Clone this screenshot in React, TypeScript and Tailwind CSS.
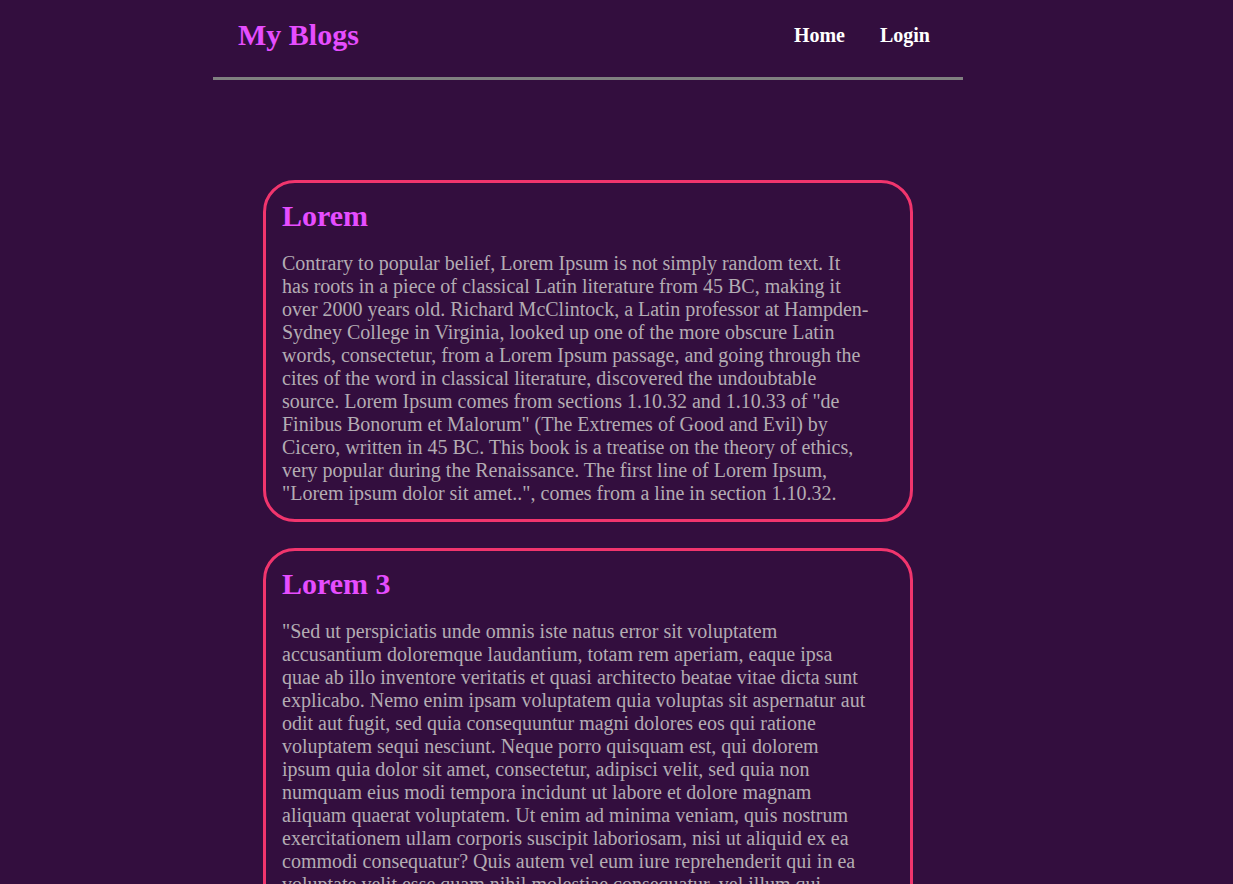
export default function App() {
  const serif = { fontFamily: '"Liberation Serif", "Times New Roman", serif' };
  const blogs = [
    {
      title: "Lorem",
      body:
        'Contrary to popular belief, Lorem Ipsum is not simply random text. It has roots in a piece of classical Latin literature from 45 BC, making it over 2000 years old. Richard McClintock, a Latin professor at Hampden-Sydney College in Virginia, looked up one of the more obscure Latin words, consectetur, from a Lorem Ipsum passage, and going through the cites of the word in classical literature, discovered the undoubtable source. Lorem Ipsum comes from sections 1.10.32 and 1.10.33 of "de Finibus Bonorum et Malorum" (The Extremes of Good and Evil) by Cicero, written in 45 BC. This book is a treatise on the theory of ethics, very popular during the Renaissance. The first line of Lorem Ipsum, "Lorem ipsum dolor sit amet..", comes from a line in section 1.10.32.',
    },
    {
      title: "Lorem 3",
      body:
        '"Sed ut perspiciatis unde omnis iste natus error sit voluptatem accusantium doloremque laudantium, totam rem aperiam, eaque ipsa quae ab illo inventore veritatis et quasi architecto beatae vitae dicta sunt explicabo. Nemo enim ipsam voluptatem quia voluptas sit aspernatur aut odit aut fugit, sed quia consequuntur magni dolores eos qui ratione voluptatem sequi nesciunt. Neque porro quisquam est, qui dolorem ipsum quia dolor sit amet, consectetur, adipisci velit, sed quia non numquam eius modi tempora incidunt ut labore et dolore magnam aliquam quaerat voluptatem. Ut enim ad minima veniam, quis nostrum exercitationem ullam corporis suscipit laboriosam, nisi ut aliquid ex ea commodi consequatur? Quis autem vel eum iure reprehenderit qui in ea voluptate velit esse quam nihil molestiae consequatur, vel illum qui dolorem eum fugiat quo voluptas nulla pariatur?"',
    },
  ];
  return (
    <div className="min-h-screen bg-[#330e3e]" style={serif}>
      <div className="ml-[213px] w-[750px]">
        <nav className="flex h-[80px] items-start border-b-[3px] border-[#808080] pl-[25px] pr-[33px] pt-[18px]">
          <h1 className="text-[30px] font-bold leading-[34px] text-[#e64dff]">My Blogs</h1>
          <div className="ml-auto flex h-[34px] items-center gap-[35px] text-[20px] font-bold text-white">
            <a href="#">Home</a>
            <a href="#">Login</a>
          </div>
        </nav>
        <div className="mx-auto mt-[100px] flex w-[650px] flex-col gap-[26px]">
          {blogs.map((b) => (
            <div
              key={b.title}
              className="rounded-[32px] border-[3px] border-[#f1356d] px-[16px] pb-[14px] pt-[16px]"
            >
              <h2 className="mb-[19px] text-[30px] font-bold leading-[34px] text-[#e64dff]">
                {b.title}
              </h2>
              <p className="w-[588px] text-[20px] leading-[23px] text-[#b3acb3]">{b.body}</p>
            </div>
          ))}
        </div>
      </div>
    </div>
  );
}
